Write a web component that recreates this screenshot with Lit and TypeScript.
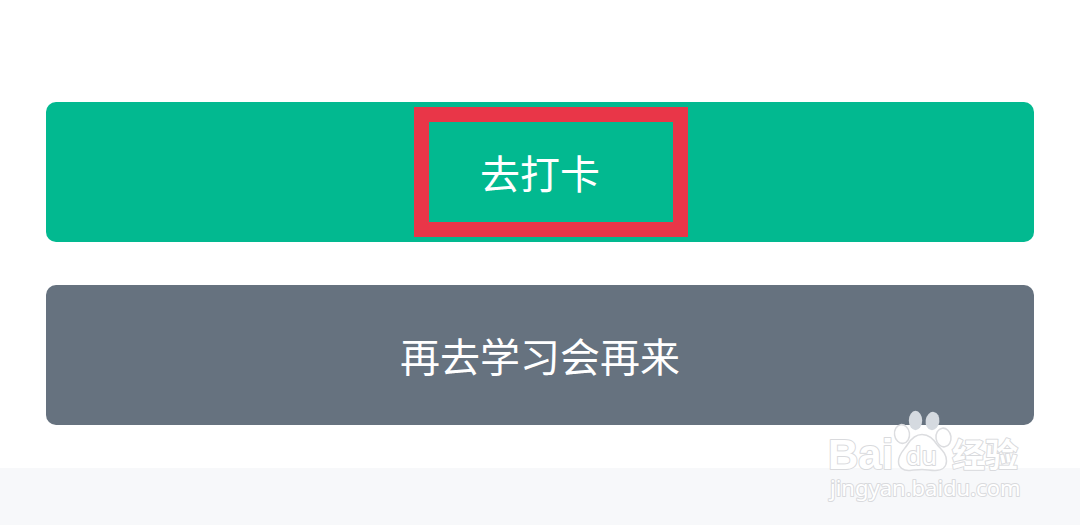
import { LitElement, html, css } from "lit";
import { customElement } from "lit/decorators.js";

@customElement("brand-watermark")
export class BrandWatermark extends LitElement {
  static styles = css`
    :host {
      display: block;
      pointer-events: none;
    }
    .mark {
      display: block;
      width: 210px;
      height: 100px;
    }
    .shape {
      fill: #fff;
      stroke: #dcdde0;
      stroke-width: 1.5;
    }
    .toe {
      fill: #d5dae0;
    }
    text {
      fill: #fff;
      stroke: #d9dadd;
      stroke-width: 2;
      stroke-linejoin: round;
      paint-order: stroke;
      font-family: "Liberation Sans", "Noto Sans CJK SC", sans-serif;
    }
    .name {
      font-size: 42px;
      font-weight: 700;
    }
    .du {
      font-size: 25px;
      font-family: "Noto Sans", sans-serif;
    }
    .cn {
      font-size: 33px;
      font-weight: 700;
      font-family: "Noto Sans CJK SC", sans-serif;
    }
    .site {
      font-size: 22px;
      font-family: "Noto Sans", sans-serif;
    }
  `;

  render() {
    return html`
      <svg class="mark" viewBox="0 0 210 100" role="img" aria-label="Baidu 经验">
        <text class="name" x="8" y="64">Bai</text>
        <ellipse class="toe" cx="95.5" cy="15.5" rx="6.7" ry="9.7" />
        <ellipse class="toe" cx="112.5" cy="16" rx="6.9" ry="9.2" transform="rotate(8 112.5 16)" />
        <ellipse class="shape" cx="82" cy="29" rx="7.5" ry="9.4" transform="rotate(-8 82 29)" />
        <ellipse class="shape" cx="123.5" cy="32.5" rx="7.5" ry="9.4" transform="rotate(-8 123.5 32.5)" />
        <path
          class="shape"
          d="M102 29.5C95 29.5 91 34 87.500 39.500C84 45 78.500 49 78.500 56.500C78.500 62.500 83 66 90 65.500C95 65 98 64.500 102 64.500C107 64.500 110 65.500 115 65.500C122 65.500 126.500 62 126.500 56C126.500 48 121 44.500 117 39.500C113 34 109 29.500 102 29.500Z"
        />
        <text class="du" x="86" y="60">du</text>
        <text class="cn" x="132" y="62">经验</text>
        <text class="site" x="10" y="91">jingyan.baidu.com</text>
      </svg>
    `;
  }
}

@customElement("app-root")
export class AppRoot extends LitElement {
  static styles = css`
    :host {
      display: flex;
      flex-direction: column;
      position: relative;
      min-height: 100vh;
      background: #fff;
      font-family: "Noto Sans CJK SC", sans-serif;
    }
    .actions {
      display: flex;
      flex-direction: column;
      gap: 43px;
      padding: 102px 46px 43px;
    }
    .button {
      position: relative;
      display: flex;
      align-items: center;
      justify-content: center;
      height: 140px;
      padding: 0;
      border: 0;
      border-radius: 10px;
      color: #fff;
      font-family: inherit;
      font-size: 40px;
      line-height: 60px;
      font-weight: 400;
      cursor: pointer;
    }
    .primary {
      background: #02b990;
    }
    .secondary {
      background: #66727f;
    }
    .highlight {
      position: absolute;
      top: 5px;
      left: calc(50% + 11px);
      width: 274px;
      height: 130px;
      box-sizing: border-box;
      border: 15px solid #e93648;
      transform: translateX(-50%);
      pointer-events: none;
    }
    .footer {
      flex: 1;
      background: #f7f8fa;
    }
    .watermark {
      position: absolute;
      right: 50px;
      bottom: 20px;
    }
  `;

  render() {
    return html`
      <main class="actions">
        <button class="button primary" type="button">
          去打卡
          <span class="highlight"></span>
        </button>
        <button class="button secondary" type="button">再去学习会再来</button>
      </main>
      <footer class="footer"></footer>
      <brand-watermark class="watermark"></brand-watermark>
    `;
  }
}
